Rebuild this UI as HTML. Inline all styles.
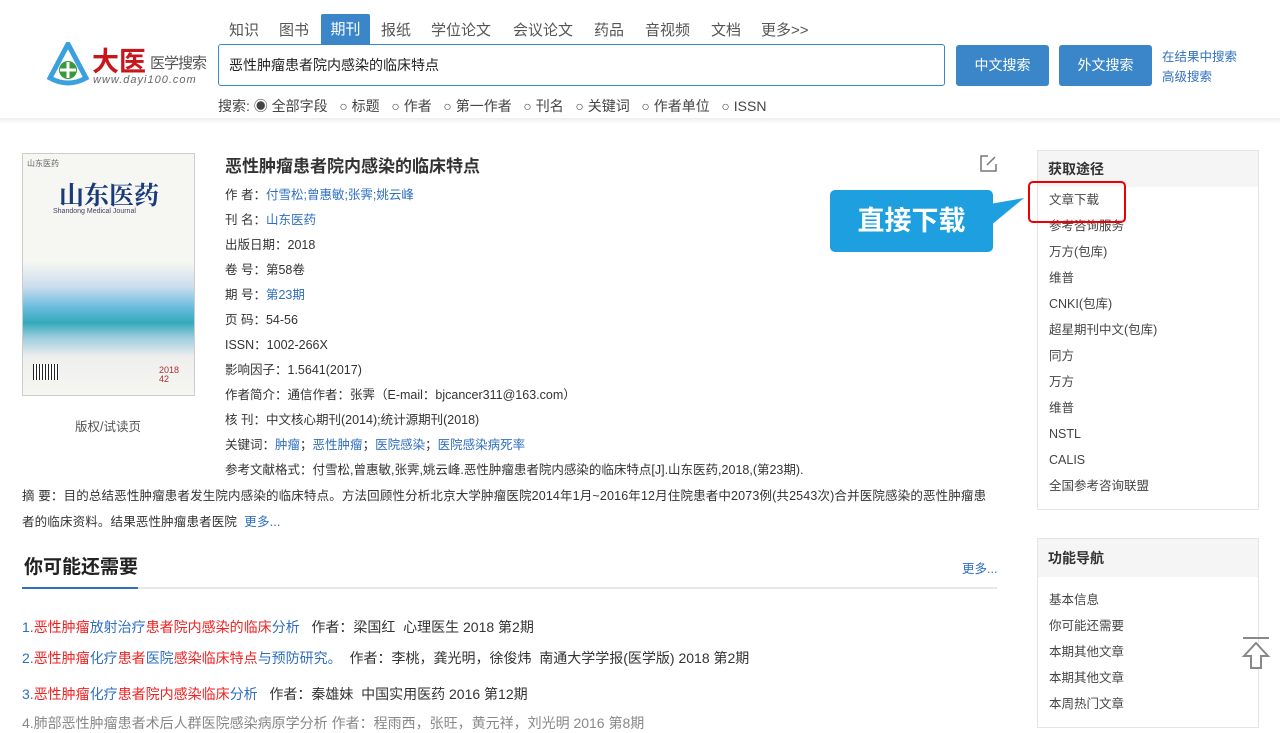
<!DOCTYPE html>
<html><head><meta charset="utf-8"><style>
*{margin:0;padding:0;box-sizing:border-box}
body{width:1280px;height:720px;overflow:hidden;background:#fff;font-family:"Liberation Sans","Noto Sans CJK SC",sans-serif;color:#333;position:relative;font-size:13px}
.a{position:absolute;white-space:nowrap}
.nv{position:absolute;top:19px;font-size:15px;color:#555}
.blue{color:#2f6fc0}
.red{color:#e22}
.info div{height:25px;line-height:25px;font-size:12.5px}
.side div{height:26px;line-height:26px;font-size:12.5px;padding-left:12px}
</style></head><body>
<div class="a" style="left:0;top:118px;width:1280px;height:6px;background:linear-gradient(#eee,#fff)"></div>
<!-- logo -->
<svg class="a" style="left:46px;top:42px" width="44" height="46" viewBox="0 0 44 46"><path d="M22 2 L40 36 Q22 46 4 36 Z" fill="none" stroke="#3aa0e0" stroke-width="5"/><circle cx="22" cy="28" r="9" fill="#3a9a3a"/><rect x="20.5" y="20" width="3" height="16" fill="#fff"/><rect x="14" y="26.5" width="16" height="3" fill="#fff"/></svg>
<div class="a" style="left:92px;top:40px;font-size:27px;font-weight:bold;color:#c8161d">大医</div>
<div class="a" style="left:150px;top:52px;font-size:15px;color:#555;letter-spacing:-1px">医学搜索</div>
<div class="a" style="left:93px;top:74px;font-size:11px;color:#666;font-style:italic;letter-spacing:1px">www.dayi100.com</div>
<span class="nv" style="left:229px">知识</span><span class="nv" style="left:279px">图书</span>
<div class="a" style="left:321px;top:14px;width:49px;height:31px;background:#3b86c8;color:#fff;font-size:15px;text-align:center;line-height:31px;border-radius:2px 2px 0 0">期刊</div>
<span class="nv" style="left:381px">报纸</span><span class="nv" style="left:431px">学位论文</span><span class="nv" style="left:513px">会议论文</span><span class="nv" style="left:594px">药品</span><span class="nv" style="left:645px">音视频</span><span class="nv" style="left:711px">文档</span><span class="nv" style="left:761px">更多&gt;&gt;</span>
<div class="a" style="left:218px;top:44px;width:727px;height:42px;border:1px solid #3b86c8;border-radius:3px;font-size:14px;line-height:40px;padding-left:10px;color:#222">恶性肿瘤患者院内感染的临床特点</div>
<div class="a" style="left:956px;top:45px;width:93px;height:41px;background:#3b86c8;color:#fff;font-size:14px;text-align:center;line-height:41px;border-radius:3px">中文搜索</div>
<div class="a" style="left:1059px;top:45px;width:93px;height:41px;background:#3b86c8;color:#fff;font-size:14px;text-align:center;line-height:41px;border-radius:3px">外文搜索</div>
<div class="a blue" style="left:1162px;top:47px;font-size:12.5px;line-height:20px">在结果中搜索<br>高级搜索</div>
<div class="a" style="left:218px;top:96px;font-size:14px;color:#444">搜索: ◉ 全部字段 &nbsp; ○ 标题 &nbsp; ○ 作者 &nbsp; ○ 第一作者 &nbsp; ○ 刊名 &nbsp; ○ 关键词 &nbsp; ○ 作者单位 &nbsp; ○ ISSN</div>
<!-- cover -->
<div class="a" style="left:22px;top:153px;width:173px;height:243px;border:1px solid #ccc;background:linear-gradient(180deg,#f6f6f2 0%,#f6f6f2 45%,#cde 55%,#6bd 64%,#3ab 70%,#9cd 76%,#eee 84%,#f6f6f2 100%)">
<div class="a" style="left:4px;top:4px;font-size:8px;color:#666">山东医药</div>
<div class="a" style="left:36px;top:22px;font-size:25px;font-weight:bold;color:#1a3a7a;font-family:'Noto Serif CJK SC',serif">山东医药</div>
<div class="a" style="left:30px;top:54px;font-size:7px;color:#446">Shandong Medical Journal</div>
<div class="a" style="left:10px;top:210px;width:26px;height:16px;background:repeating-linear-gradient(90deg,#222 0 1px,#fff 1px 3px)"></div>
<div class="a" style="left:136px;top:212px;font-size:9px;color:#a33;line-height:9px">2018<br>42</div>
</div>
<div class="a" style="left:75px;top:416px;font-size:12.5px;color:#555">版权/试读页</div>
<div class="a" style="left:225px;top:152px;font-size:17px;font-weight:bold;color:#333">恶性肿瘤患者院内感染的临床特点</div>
<svg class="a" style="left:979px;top:154px" width="19" height="19"><path d="M9 2H2V17H17V10" fill="none" stroke="#777" stroke-width="1.5"/><path d="M8 11L16 3" stroke="#777" stroke-width="1.5"/></svg>
<div class="a info" style="left:225px;top:183px">
<div>作 者：<span class="blue">付雪松;曾惠敏;张霁;姚云峰</span></div>
<div>刊 名：<span class="blue">山东医药</span></div>
<div>出版日期：2018</div>
<div>卷 号：第58卷</div>
<div>期 号：<span class="blue">第23期</span></div>
<div>页 码：54-56</div>
<div>ISSN：1002-266X</div>
<div>影响因子：1.5641(2017)</div>
<div>作者简介：通信作者：张霁（E-mail：bjcancer311@163.com）</div>
<div>核 刊：中文核心期刊(2014);统计源期刊(2018)</div>
<div>关键词：<span class="blue">肿瘤</span>；<span class="blue">恶性肿瘤</span>；<span class="blue">医院感染</span>；<span class="blue">医院感染病死率</span></div>
<div>参考文献格式：付雪松,曾惠敏,张霁,姚云峰.恶性肿瘤患者院内感染的临床特点[J].山东医药,2018,(第23期).</div>
</div>
<div class="a" style="left:22px;top:483px;font-size:12.5px;line-height:26px;white-space:normal;width:975px;letter-spacing:0.15px">摘 要：目的总结恶性肿瘤患者发生院内感染的临床特点。方法回顾性分析北京大学肿瘤医院2014年1月~2016年12月住院患者中2073例(共2543次)合并医院感染的恶性肿瘤患者的临床资料。结果恶性肿瘤患者医院 &nbsp;<span class="blue">更多...</span></div>
<div class="a" style="left:24px;top:552px;font-size:19px;font-weight:bold;color:#222">你可能还需要</div>
<div class="a blue" style="left:962px;top:558px;font-size:12.5px">更多...</div>
<div class="a" style="left:22px;top:587px;width:975px;height:2px;background:#e8e8e8"></div>
<div class="a" style="left:22px;top:587px;width:116px;height:2px;background:#2f6fc0"></div>
<div class="a" style="left:22px;top:617px;font-size:14px"><span class="blue">1.</span><span class="red">恶性肿瘤</span><span class="blue">放射治疗</span><span class="red">患者院内感染的临床</span><span class="blue">分析</span> &nbsp; 作者：梁国红 &nbsp;心理医生 2018 第2期</div>
<div class="a" style="left:22px;top:648px;font-size:14px"><span class="blue">2.</span><span class="red">恶性肿瘤</span><span class="blue">化疗</span><span class="red">患者</span><span class="blue">医院</span><span class="red">感染临床特点</span><span class="blue">与预防研究。</span> &nbsp;作者：李桃，龚光明，徐俊炜 &nbsp;南通大学学报(医学版) 2018 第2期</div>
<div class="a" style="left:22px;top:684px;font-size:14px"><span class="blue">3.</span><span class="red">恶性肿瘤</span><span class="blue">化疗</span><span class="red">患者院内感染临床</span><span class="blue">分析</span> &nbsp; 作者：秦雄妹 &nbsp;中国实用医药 2016 第12期</div>
<div class="a" style="left:22px;top:713px;font-size:14px;color:#888">4.肺部恶性肿瘤患者术后人群医院感染病原学分析 作者：程雨西，张旺，黄元祥，刘光明 2016 第8期</div>
<!-- sidebar -->
<div class="a" style="left:1037px;top:150px;width:222px;height:360px;border:1px solid #e4e4e4"></div>
<div class="a" style="left:1038px;top:151px;width:220px;height:36px;background:#f5f5f5;font-size:14px;font-weight:bold;line-height:36px;padding-left:10px">获取途径</div>
<div class="a side" style="left:1037px;top:187px;color:#444">
<div>文章下载</div><div>参考咨询服务</div><div>万方(包库)</div><div>维普</div><div>CNKI(包库)</div><div>超星期刊中文(包库)</div><div>同方</div><div>万方</div><div>维普</div><div>NSTL</div><div>CALIS</div><div>全国参考咨询联盟</div></div>
<div class="a" style="left:1028px;top:181px;width:98px;height:42px;border:2px solid #e00;border-radius:5px"></div>
<div class="a" style="left:830px;top:190px;width:163px;height:62px;background:#1ea0e0;border-radius:5px;color:#fff;font-size:27px;font-weight:bold;text-align:center;line-height:62px">直接下载</div>
<svg class="a" style="left:990px;top:190px" width="36" height="40"><path d="M0 14 L34 8 L0 36Z" fill="#1ea0e0"/></svg>
<div class="a" style="left:1037px;top:538px;width:222px;height:190px;border:1px solid #e4e4e4"></div>
<div class="a" style="left:1038px;top:539px;width:220px;height:38px;background:#f5f5f5;font-size:14px;font-weight:bold;line-height:38px;padding-left:10px">功能导航</div>
<div class="a side" style="left:1037px;top:587px;color:#444"><div>基本信息</div><div>你可能还需要</div><div>本期其他文章</div><div>本期其他文章</div><div>本周热门文章</div></div>
<svg class="a" style="left:1241px;top:636px" width="30" height="34"><path d="M2 2H28" stroke="#888" stroke-width="2"/><path d="M15 7 L27 20 H20 V32 H10 V20 H3Z" fill="#fff" stroke="#888" stroke-width="2"/></svg>
</body></html>
